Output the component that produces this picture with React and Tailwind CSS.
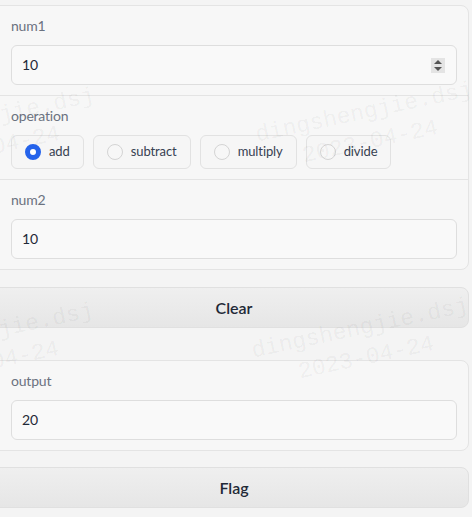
import React from 'react';

const wm = [
  { left: 253, top: 121 },
  { left: 249, top: 337 },
  { left: -125, top: 127 },
  { left: -126, top: 342 },
];

function Watermark({ left, top }) {
  return (
    <div
      className="absolute origin-top-left -rotate-12 flex flex-col items-center text-[23px] leading-[30px] text-black/[0.05] font-['Liberation_Mono',monospace] pointer-events-none whitespace-nowrap"
      style={{ left, top }}
    >
      <span>dingshengjie.dsj</span>
      <span>2023-04-24</span>
    </div>
  );
}

function Field({ label, value, spinner }) {
  return (
    <div className="px-[11px] py-[10px] flex flex-col gap-[9px]">
      <span className="h-5 leading-5 text-sm text-[#6b7280] tracking-[-0.2px]">{label}</span>
      <div className="h-10 flex items-center justify-between rounded-md border border-[#dedede] bg-[#f9f9f9] pl-[10px] pr-[11px] text-sm text-[#1f2937]">
        <span>{value}</span>
        {spinner && (
          <div className="w-[14px] h-[15px] bg-[#e4e4e4] flex flex-col items-center justify-center gap-[3px]">
            <svg width="8" height="4" viewBox="0 0 8 4"><path d="M0 4 L4 0 L8 4 Z" fill="#555" /></svg>
            <svg width="8" height="4" viewBox="0 0 8 4"><path d="M0 0 L4 4 L8 0 Z" fill="#555" /></svg>
          </div>
        )}
      </div>
    </div>
  );
}

function Radio({ label, checked }) {
  return (
    <div className="h-[34px] flex items-center gap-2 pl-[13px] pr-[13px] rounded-md border border-[#e2e2e2] bg-[#f6f6f6] text-[13px] tracking-[-0.1px] text-[#374151]">
      {checked ? (
        <span className="w-4 h-4 rounded-full border-[5px] border-[#2563eb] bg-white" />
      ) : (
        <span className="w-4 h-4 rounded-full border border-[#d4d4d4] bg-[#f7f7f7]" />
      )}
      <span>{label}</span>
    </div>
  );
}

function Btn({ children }) {
  return (
    <div className="-ml-px h-[41px] flex items-center justify-center rounded-r-lg border border-[#e0e0e0] bg-gradient-to-b from-[#efefef] to-[#e6e6e6] text-base font-semibold text-[#1f2937]">
      {children}
    </div>
  );
}

export default function App() {
  return (
    <div className="relative overflow-hidden min-h-screen bg-[#f4f4f4] pt-[5px] pr-[3px] font-['Lato',sans-serif]">
      <div className="-ml-px rounded-r-lg border border-[#e4e4e4] bg-[#f7f7f7] divide-y divide-[#e4e4e4]">
        <Field label="num1" value="10" spinner />
        <div className="px-[11px] py-[10px] flex flex-col gap-[9px]">
          <span className="h-5 leading-5 text-sm text-[#6b7280] tracking-[-0.2px]">operation</span>
          <div className="flex gap-[9px]">
            <Radio label="add" checked />
            <Radio label="subtract" />
            <Radio label="multiply" />
            <Radio label="divide" />
          </div>
        </div>
        <Field label="num2" value="10" />
      </div>

      <div className="mt-[17px]">
        <Btn>Clear</Btn>
      </div>

      <div className="mt-[32px] -ml-px rounded-r-lg border border-[#e4e4e4] bg-[#f7f7f7]">
        <Field label="output" value="20" />
      </div>

      <div className="mt-[16px]">
        <Btn>Flag</Btn>
      </div>

      {wm.map((w, i) => (
        <Watermark key={i} {...w} />
      ))}
    </div>
  );
}
